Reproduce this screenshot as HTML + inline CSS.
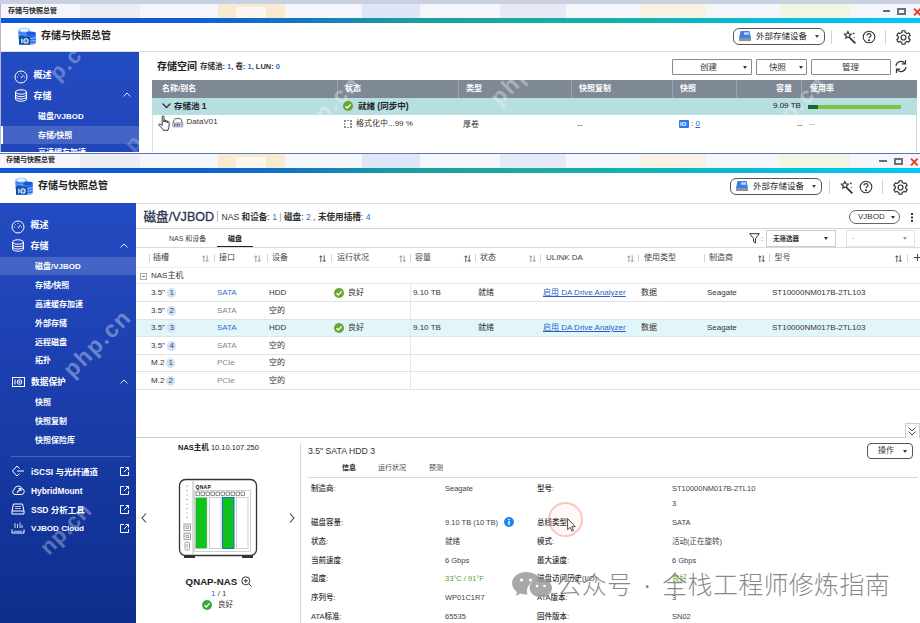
<!DOCTYPE html>
<html lang="zh-CN">
<head>
<meta charset="utf-8">
<title>存储与快照总管</title>
<style>
*{box-sizing:border-box;margin:0;padding:0}
html,body{width:920px;height:623px;overflow:hidden;background:#fff}
body{position:relative;font-family:"Liberation Sans","Noto Sans CJK SC",sans-serif;font-size:8px;color:#333;line-height:1}
.a{position:absolute;white-space:nowrap}
.t{position:absolute;white-space:nowrap;line-height:12px;height:12px}
.b{font-weight:bold}
.m{font-weight:500}
.w{color:#fff}
.bl{color:#2a6fc9}
.gr{color:#999}
svg{position:absolute;overflow:visible}
/* window chrome */
.deskstrip{left:0;top:0;width:920px;height:4px;background:#c9d1e1}
.titlebar{left:0;width:920px;background:#f4f6fb;overflow:hidden}
.grad{left:0;width:920px;background:linear-gradient(90deg,#0e56d9 0%,#0f5cd6 20%,#1478c0 33%,#1a9aa4 43%,#1aaa9a 55%,#10b3b2 70%,#06bcdc 84%,#00c8fa 100%)}
.hdr{left:0;width:920px;background:#fff;border-bottom:1px solid #dcdfe4}
.side{background:linear-gradient(180deg,#234bc1 0%,#1d41b2 35%,#13359a 75%,#0f2d8c 100%)}
.sel{background:rgba(255,255,255,.16)}
.pill{border:1px solid #555;border-radius:8px;background:#fff}
.btn{border:1px solid #8a8a8a;background:#fff;border-radius:1px}
.th{background:#7f8895}
.ln{background:#e2e4e8}
.hd{font-size:8px;color:#444}
.wm{font-size:22px;font-weight:bold;color:#fff;letter-spacing:2.3px;line-height:26px;transform:translate(-50%,-50%) rotate(-45deg)}
.sep{width:1px;background:#d2d2d2}
</style>
</head>
<body>
<!-- ================= WINDOW 1 ================= -->
<div class="a deskstrip"></div>
<div class="a titlebar" style="top:4px;height:14px" id="tb1"><div class="a" style="left:80px;top:0;width:60px;height:100%;background:#eceef3"></div><div class="a" style="left:218px;top:0;width:67px;height:100%;background:#f8ebd2"></div><div class="a" style="left:236px;top:3px;width:30px;height:100%;background:#fdf8ef"></div><div class="a" style="left:362px;top:0;width:58px;height:100%;background:#dde7f8"></div><div class="a" style="left:500px;top:0;width:66px;height:100%;background:#e6eaf8"></div><div class="a" style="left:640px;top:0;width:66px;height:100%;background:#f7f2e4"></div><div class="a" style="left:780px;top:0;width:70px;height:100%;background:#f2f5e2"></div></div>
<div class="a grad" style="top:18px;height:5px"></div>
<div class="a hdr" style="top:23px;height:29px"></div>
<div class="a" style="left:1px;top:52px;width:138px;height:100px;background:linear-gradient(180deg,#234bc1,#2046ba)" id="side1"></div>
<div class="a" style="left:0;top:4px;width:1px;height:148px;background:#b9b3cf"></div>
<div id="w1">
<!-- title bar -->
<div class="t" style="left:8px;top:5px;font-size:7px;color:#222;font-weight:bold">存储与快照总管</div>
<div class="a" style="left:882.500px;top:10px;width:7.500px;height:2px;background:#666e7a"></div>
<div class="a" style="left:897px;top:8px;width:9px;height:7px;border:2px solid #6a707c"></div>
<svg style="left:912.500px;top:7.500px" width="8" height="8" viewBox="0 0 8 8"><path d="M1 .700L7.600 7.300M7.600 .700L1 7.300" stroke="#e8392a" stroke-width="1.900" fill="none"/></svg>
<!-- app icon -->
<svg style="left:18px;top:26.500px" width="18" height="18" viewBox="0 0 18 18"><path d="M.5 3v9h11.500V3z" fill="#2d7cf5"/><path d="M.5 5.500c1.500 2 10 2 11.500 0v1.300c-1.500 2-10 2-11.500 0z" fill="#5a9bff"/><ellipse cx="6.250" cy="3" rx="5.750" ry="2.600" fill="#a6cdff"/><ellipse cx="6.250" cy="3" rx="4" ry="1.500" fill="#e8f2ff"/><path d="M8.600 6.200v9.500c0 1 2 1.800 4.600 1.800s4.600-.8 4.600-1.800V6.200z" fill="#2b6cf0"/><path d="M12 10.800c2.500.3 5-.3 5.800-1v1c-.8.800-3.300 1.300-5.800 1zM12 13.500c2.500.3 5-.3 5.800-1v1c-.8.800-3.300 1.300-5.800 1zM12 16.200c2.500.3 5-.3 5.800-1v.8c-.8.800-3.300 1.300-5.800 1z" fill="#8fbcff"/><ellipse cx="13.200" cy="6.200" rx="4.600" ry="1.800" fill="#1f56d8"/><rect x="2.300" y="8.800" width="3.500" height="1.500" fill="#0b4fa6"/><rect x="1" y="9.800" width="11.200" height="8" fill="#0b4fa6"/><rect x="3.300" y="11.600" width="1.200" height="4.600" fill="#fff"/><circle cx="8" cy="13.900" r="2.100" fill="none" stroke="#fff" stroke-width="1.100"/><path d="M7.500 13.100l1.300.8-1.300.8z" fill="#fff"/></svg>
<div class="t b" style="left:41px;top:29px;font-size:10px;color:#222;line-height:13px">存储与快照总管</div>
<!-- header right -->
<div class="a pill" style="left:733px;top:28px;width:92px;height:17px;border-radius:6px"></div>
<svg style="left:738px;top:30px" width="14" height="12" viewBox="0 0 14 12"><path d="M2.500 1h9l1.500 7H1z" fill="#3f7fe0"/><rect x="1" y="8" width="12" height="3" rx=".5" fill="#8a949e"/><rect x="6" y="2.300" width="5" height="2.500" fill="#bcd6ff"/></svg>
<div class="t" style="left:756px;top:30px;font-size:8.500px;color:#222">外部存储设备</div>
<div class="a" style="left:815px;top:35px;border:2.500px solid transparent;border-top:3px solid #444;border-bottom:0"></div>
<div class="a sep" style="left:831px;top:30px;height:14px"></div>
<svg style="left:842px;top:30px" width="15" height="15" viewBox="0 0 14 14" fill="none" stroke="#333" stroke-width="1.100"><path d="M5.500 1.500l1 2 2.200.3-1.600 1.600.4 2.200-2-1.100-2 1.100.4-2.200L2.300 3.800l2.200-.3z"/><path d="M7.500 7.500l5 5" stroke-width="1.600"/><path d="M11 2.500v1.500M10.300 3.200h1.500M11.500 6.500v1" stroke-width=".8"/></svg>
<svg style="left:862px;top:30.400px" width="14" height="14" viewBox="0 0 14 14" fill="none" stroke="#333" stroke-width="1.100"><circle cx="7" cy="7" r="5.800"/><path d="M5 5.600c0-1.300 1-2 2-2s2 .7 2 1.800c0 1.300-2 1.400-2 2.900" /><circle cx="7" cy="10.300" r=".5" fill="#333"/></svg>
<div class="a sep" style="left:885px;top:30px;height:14px"></div>
<svg style="left:894.700px;top:29.200px" width="17" height="17" viewBox="0 0 24 24" fill="none" stroke="#333" stroke-width="1.700"><path d="M12 8.500a3.500 3.500 0 1 0 0 7 3.500 3.500 0 0 0 0-7z"/><path d="M19.400 13.500c.1-.5.100-1 .1-1.500s0-1-.1-1.500l2-1.600-2-3.400-2.400 1a7.600 7.600 0 0 0-2.600-1.500L14 2.500h-4l-.4 2.500A7.600 7.600 0 0 0 7 6.500l-2.400-1-2 3.400 2 1.600c-.1.500-.1 1-.1 1.500s0 1 .1 1.500l-2 1.600 2 3.400 2.400-1a7.600 7.600 0 0 0 2.600 1.500l.4 2.500h4l.4-2.500a7.600 7.600 0 0 0 2.600-1.500l2.400 1 2-3.400z"/></svg>
<!-- sidebar 1 -->
<div class="a sel" style="left:1px;top:126px;width:138px;height:18px"></div>
<div class="a" style="left:1px;top:126px;width:2px;height:18px;background:#fff"></div>
<svg style="left:14px;top:70px" width="14" height="14" viewBox="0 0 14 14" fill="none" stroke="#fff" stroke-width="1"><circle cx="7" cy="7" r="6"/><path d="M7 8l2.500-3" /><path d="M3 7h1M10 7h1M7 3v1M4.200 4.200l.7.700" stroke-width=".8"/></svg>
<div class="t b w" style="left:33.500px;top:69px;font-size:9px">概述</div>
<svg style="left:14px;top:89px" width="14" height="13" viewBox="0 0 14 13" fill="none" stroke="#fff" stroke-width="1"><ellipse cx="7" cy="3" rx="5.500" ry="2.200"/><path d="M1.500 3v7c0 1.200 2.500 2.200 5.500 2.200s5.500-1 5.500-2.200V3M1.500 5.500c0 1.200 2.500 2.200 5.500 2.200s5.500-1 5.500-2.200M1.500 7.800c0 1.200 2.500 2.200 5.500 2.200s5.500-1 5.500-2.200"/></svg>
<div class="t b w" style="left:33.500px;top:89.500px;font-size:9px">存储</div>
<svg style="left:123px;top:92px" width="8" height="5" viewBox="0 0 8 5" fill="none" stroke="#dfe6ff" stroke-width="1"><path d="M.5 4.500L4 1l3.500 3.500"/></svg>
<div class="t b w" style="left:38px;top:111px;font-size:8px">磁盘/VJBOD</div>
<div class="t b w" style="left:38px;top:130px;font-size:8px">存储/快照</div>
<div class="a" style="left:1px;top:144px;width:138px;height:8px;overflow:hidden"><div class="t b w" style="left:37px;top:3px;font-size:8px">高速缓存加速</div></div>
<!-- content 1 -->
<div class="t b" style="left:157px;top:60px;font-size:10px;color:#222;line-height:13px">存储空间</div>
<div class="t b" style="left:200px;top:61px;font-size:7.500px;color:#333">存储池: <span class="bl">1</span>, 卷: <span class="bl">1</span>, LUN: <span class="bl">0</span></div>
<div class="a btn" style="left:672px;top:59px;width:80px;height:16px"></div>
<div class="t" style="left:700px;top:61px;font-size:8.500px">创建</div>
<div class="a" style="left:743px;top:66px;border:2px solid transparent;border-top:3px solid #333;border-bottom:0"></div>
<div class="a btn" style="left:756px;top:59px;width:51px;height:16px"></div>
<div class="t" style="left:769px;top:61px;font-size:8.500px">快照</div>
<div class="a" style="left:799px;top:66px;border:2px solid transparent;border-top:3px solid #333;border-bottom:0"></div>
<div class="a btn" style="left:811px;top:59px;width:80px;height:16px"></div>
<div class="t" style="left:842px;top:61px;font-size:8.500px">管理</div>
<svg style="left:894px;top:59px" width="14" height="15" viewBox="0 0 14 15" fill="none" stroke="#333" stroke-width="1.200"><path d="M2 7a5 5 0 0 1 9-2.500M12 8a5 5 0 0 1-9 2.500"/><path d="M11.500 1v3.800H7.800M2.500 14v-3.800h3.700"/></svg>
<!-- table 1 -->
<div class="a" id="w1rb" style="left:916px;top:115px;width:1px;height:37px;background:#d0d3d8"></div>
<div class="a" id="tblborder" style="left:152px;top:98px;width:1px;height:54px;background:#dcdfe3"></div>
<div class="a th" style="left:152px;top:80px;width:765px;height:18px"></div>
<div class="a" style="left:337px;top:80px;width:1px;height:18px;background:#9aa3ae"></div>
<div class="a" style="left:458px;top:80px;width:1px;height:18px;background:#9aa3ae"></div>
<div class="a" style="left:571px;top:80px;width:1px;height:18px;background:#9aa3ae"></div>
<div class="a" style="left:672px;top:80px;width:1px;height:18px;background:#9aa3ae"></div>
<div class="a" style="left:736px;top:80px;width:1px;height:18px;background:#9aa3ae"></div>
<div class="a" style="left:801px;top:80px;width:1px;height:18px;background:#9aa3ae"></div>
<div class="t b w" style="left:162px;top:82.5px;font-size:8px">名称/别名</div>
<div class="t b w" style="left:345px;top:82.5px;font-size:8px">状态</div>
<div class="t b w" style="left:466px;top:82.5px;font-size:8px">类型</div>
<div class="t b w" style="left:579px;top:82.5px;font-size:8px">快照复制</div>
<div class="t b w" style="left:680px;top:82.5px;font-size:8px">快照</div>
<div class="t b w" style="left:776px;top:82.5px;font-size:8px">容量</div>
<div class="t b w" style="left:810px;top:82.5px;font-size:8px">使用率</div>
<div class="a" style="left:152px;top:98px;width:765px;height:16.5px;background:#b7dee1"></div>
<svg style="left:162px;top:103.3px" width="9" height="6" viewBox="0 0 9 6" fill="none" stroke="#333" stroke-width="1.300"><path d="M.5.500l4 4 4-4"/></svg>
<div class="t b" style="left:174px;top:100.3px;font-size:8.500px;color:#222">存储池 1</div>
<svg style="left:343px;top:101.3px" width="10" height="10" viewBox="0 0 10 10"><circle cx="5" cy="5" r="5" fill="#68a832"/><path d="M2.500 5.200l1.800 1.800 3.300-3.600" stroke="#fff" stroke-width="1.300" fill="none"/></svg>
<div class="t b" style="left:358px;top:100.3px;font-size:8.500px;color:#222">就绪 (同步中)</div>
<div class="t" style="left:773px;top:100.3px;font-size:8px;color:#222">9.09 TB</div>
<div class="a" style="left:808px;top:105.3px;width:93px;height:4px;background:#7fc241"></div>
<div class="a" style="left:808px;top:105.3px;width:10px;height:4px;background:#156b2c"></div>
<!-- row 2 -->
<svg style="left:158px;top:115px" width="12" height="16" viewBox="0 0 12 16" fill="#fff" stroke="#222" stroke-width=".9" stroke-linejoin="round"><path d="M4.200 10.300V1.900a.9.900 0 0 1 1.800 0V7 5.900a.9.900 0 0 1 1.800 0v1.300-.6a.85.850 0 0 1 1.700 0v1.100-.4a.8.800 0 0 1 1.600 0V11c0 1.500-.5 2.400-1 3.200v1.100H5.200v-.8C4 13.500 2.500 11.800 1 10.200c-.6-.8.400-1.700 1.200-1z"/></svg>
<svg style="left:172px;top:118px" width="11.500" height="9.600" viewBox="0 0 12 10"><path d="M1 5L2.600 1.300Q2.800.6 3.600.6H8.400Q9.200.6 9.400 1.300L11 5" fill="#fff" stroke="#444" stroke-width=".9"/><rect x=".6" y="5" width="10.800" height="4.300" rx=".6" fill="#dfe7f5" stroke="#6f7f9c" stroke-width=".7"/><path d="M2.500 5.900v2.600M4.200 5.900v2.600M5.900 5.900v2.600M7.400 5.900v2.600" stroke="#333" stroke-width=".8"/><path d="M8.300 6.400h2.500L9.550 8.200z" fill="#2a6fd8"/></svg>
<div class="t" style="left:186.500px;top:115.500px;font-size:8px;color:#333">DataV01</div>
<svg style="left:344px;top:120px" width="8" height="8" viewBox="0 0 8 8" fill="#8a8a8a"><rect x="0" y="0" width="2" height="2"/><rect x="3" y="0" width="2" height="1"/><rect x="6" y="0" width="2" height="2"/><rect x="0" y="3" width="1" height="2"/><rect x="6" y="3" width="2" height="2"/><rect x="0" y="6" width="2" height="2"/><rect x="3" y="7" width="2" height="1"/><rect x="6" y="6" width="2" height="2"/></svg>
<div class="t" style="left:356px;top:118px;font-size:8px;color:#333">格式化中...99 %</div>
<div class="t" style="left:463px;top:119px;font-size:8px;color:#333">厚卷</div>
<div class="t" style="left:577px;top:119px;font-size:8px;color:#333">--</div>
<div class="a" style="left:679px;top:120px;width:10px;height:8px;background:#2a7be8;border-radius:1px"></div>
<div class="t b" style="left:680px;top:118px;font-size:6px;color:#fff">IO</div>
<div class="t" style="left:691px;top:118px;font-size:8px;color:#333">: <span style="color:#2a5fc9;text-decoration:underline">0</span></div>
<div class="t" style="left:797px;top:119px;font-size:8px;color:#333">--</div>
<div class="t" style="left:809px;top:118px;font-size:8px;color:#888">--</div>
</div>


<!-- ================= WINDOW 2 ================= -->
<div class="a titlebar" style="top:152.600px;height:15.400px;border-top:1px solid #5b78bb" id="tb2"><div class="a" style="left:80px;top:0;width:60px;height:100%;background:#eceef3"></div><div class="a" style="left:218px;top:0;width:67px;height:100%;background:#f8ebd2"></div><div class="a" style="left:236px;top:3px;width:30px;height:100%;background:#fdf8ef"></div><div class="a" style="left:362px;top:0;width:58px;height:100%;background:#dde7f8"></div><div class="a" style="left:500px;top:0;width:66px;height:100%;background:#e6eaf8"></div><div class="a" style="left:640px;top:0;width:66px;height:100%;background:#f7f2e4"></div><div class="a" style="left:780px;top:0;width:70px;height:100%;background:#f2f5e2"></div></div>
<div class="a grad" style="top:168px;height:5px"></div>
<div class="a hdr" style="top:173px;height:30.5px"></div>
<div class="a side" style="left:0;top:203px;width:136px;height:420px" id="side2"></div>
<div id="w2">
<div class="t b" style="left:6px;top:154px;font-size:7px;color:#222">存储与快照总管</div>
<div class="a" style="left:879px;top:160px;width:8px;height:2px;background:#666e7a"></div>
<div class="a" style="left:894px;top:158px;width:9px;height:7px;border:2px solid #6a707c"></div>
<svg style="left:909.5px;top:157.5px" width="8" height="8" viewBox="0 0 8 8"><path d="M1 .7L7.600 7.300M7.600 .7L1 7.300" stroke="#e8392a" stroke-width="1.900" fill="none"/></svg>
<svg style="left:15px;top:176.5px" width="18" height="18" viewBox="0 0 18 18"><path d="M.5 3v9h11.500V3z" fill="#2d7cf5"/><path d="M.5 5.500c1.500 2 10 2 11.500 0v1.300c-1.500 2-10 2-11.500 0z" fill="#5a9bff"/><ellipse cx="6.250" cy="3" rx="5.750" ry="2.600" fill="#a6cdff"/><ellipse cx="6.250" cy="3" rx="4" ry="1.500" fill="#e8f2ff"/><path d="M8.600 6.200v9.500c0 1 2 1.800 4.600 1.800s4.600-.8 4.600-1.800V6.200z" fill="#2b6cf0"/><path d="M12 10.800c2.500.3 5-.3 5.800-1v1c-.8.800-3.300 1.300-5.800 1zM12 13.500c2.500.3 5-.3 5.800-1v1c-.8.800-3.300 1.300-5.800 1zM12 16.200c2.500.3 5-.3 5.800-1v.8c-.8.800-3.300 1.300-5.800 1z" fill="#8fbcff"/><ellipse cx="13.200" cy="6.200" rx="4.600" ry="1.800" fill="#1f56d8"/><rect x="2.300" y="8.800" width="3.500" height="1.500" fill="#0b4fa6"/><rect x="1" y="9.800" width="11.200" height="8" fill="#0b4fa6"/><rect x="3.300" y="11.600" width="1.200" height="4.600" fill="#fff"/><circle cx="8" cy="13.900" r="2.100" fill="none" stroke="#fff" stroke-width="1.100"/><path d="M7.500 13.100l1.300.8-1.300.8z" fill="#fff"/></svg>
<div class="t b" style="left:38px;top:179px;font-size:10px;color:#222;line-height:13px">存储与快照总管</div>
<div class="a pill" style="left:730px;top:178px;width:92px;height:17px;border-radius:6px"></div>
<svg style="left:735px;top:180px" width="14" height="12" viewBox="0 0 14 12"><path d="M2.500 1h9l1.500 7H1z" fill="#3f7fe0"/><rect x="1" y="8" width="12" height="3" rx=".5" fill="#8a949e"/><rect x="6" y="2.300" width="5" height="2.500" fill="#bcd6ff"/></svg>
<div class="t" style="left:753px;top:180px;font-size:8.5px;color:#222">外部存储设备</div>
<div class="a" style="left:812px;top:185px;border:2.5px solid transparent;border-top:3px solid #444;border-bottom:0"></div>
<div class="a sep" style="left:829px;top:180px;height:14px"></div>
<svg style="left:839px;top:180px" width="15" height="15" viewBox="0 0 14 14"><g fill="none" stroke="#333" stroke-width="1.100"><path d="M5.500 1.500l1 2 2.200.3-1.600 1.600.4 2.200-2-1.100-2 1.100.4-2.200L2.300 3.800l2.200-.3z"/><path d="M7.500 7.500l5 5" stroke-width="1.600"/><path d="M11 2.500v1.500M10.300 3.200h1.500M11.500 6.500v1" stroke-width=".8"/></g></svg>
<svg style="left:859.3px;top:180.4px" width="14" height="14" viewBox="0 0 14 14"><g fill="none" stroke="#333" stroke-width="1.100"><circle cx="7" cy="7" r="5.800"/><path d="M5 5.600c0-1.300 1-2 2-2s2 .7 2 1.800c0 1.300-2 1.400-2 2.900"/><circle cx="7" cy="10.300" r=".5" fill="#333"/></g></svg>
<div class="a sep" style="left:882px;top:180px;height:14px"></div>
<svg style="left:891.7px;top:179px" width="17" height="17" viewBox="0 0 24 24"><g fill="none" stroke="#333" stroke-width="1.700"><path d="M12 8.500a3.500 3.500 0 1 0 0 7 3.500 3.500 0 0 0 0-7z"/><path d="M19.400 13.500c.1-.5.100-1 .1-1.500s0-1-.1-1.500l2-1.600-2-3.400-2.400 1a7.600 7.600 0 0 0-2.600-1.500L14 2.500h-4l-.4 2.500A7.600 7.600 0 0 0 7 6.500l-2.400-1-2 3.400 2 1.600c-.1.500-.1 1-.1 1.500s0 1 .1 1.500l-2 1.600 2 3.400 2.400-1a7.600 7.600 0 0 0 2.600 1.500l.4 2.500h4l.4-2.500a7.600 7.600 0 0 0 2.600-1.500l2.400 1 2-3.400z"/></g></svg>
<div class="a sel" style="left:0;top:257px;width:136px;height:18px"></div>
<svg style="left:11.1px;top:220.1px" width="14" height="14" viewBox="0 0 14 14"><g fill="none" stroke="#fff" stroke-width="1"><circle cx="7" cy="7" r="6"/><path d="M7 8l2.500-3"/><path d="M3 7h1M10 7h1M7 3v1M4.200 4.200l.7.700" stroke-width=".8"/></g></svg>
<div class="t b w" style="left:30.5px;top:219px;font-size:9px">概述</div>
<svg style="left:11.2px;top:239.3px" width="14" height="13" viewBox="0 0 14 13"><g fill="none" stroke="#fff" stroke-width="1"><ellipse cx="7" cy="3" rx="5.500" ry="2.200"/><path d="M1.500 3v7c0 1.200 2.500 2.200 5.500 2.200s5.500-1 5.500-2.200V3M1.500 5.500c0 1.200 2.500 2.200 5.500 2.200s5.500-1 5.500-2.200M1.500 7.800c0 1.200 2.500 2.200 5.500 2.200s5.500-1 5.500-2.200"/></g></svg>
<div class="t b w" style="left:30.5px;top:239.5px;font-size:9px">存储</div>
<svg style="left:120px;top:243px" width="8" height="5" viewBox="0 0 8 5"><path d="M.5 4.500L4 1l3.500 3.500" fill="none" stroke="#dfe6ff" stroke-width="1"/></svg>
<div class="t b w" style="left:35px;top:261px;font-size:8px">磁盘/VJBOD</div>
<div class="t b w" style="left:35px;top:280px;font-size:8px">存储/快照</div>
<div class="t b w" style="left:35px;top:299px;font-size:8px">高速缓存加速</div>
<div class="t b w" style="left:35px;top:318px;font-size:8px">外部存储</div>
<div class="t b w" style="left:35px;top:337px;font-size:8px">远程磁盘</div>
<div class="t b w" style="left:35px;top:355px;font-size:8px">拓扑</div>
<svg style="left:12px;top:377px" width="13" height="10" viewBox="0 0 13 10" fill="none" stroke="#fff" stroke-width="1"><rect x=".5" y=".5" width="12" height="9"/><path d="M3 2.5v5"/><circle cx="7.5" cy="5" r="2.3"/><circle cx="7.5" cy="5" r=".6" fill="#fff"/></svg>
<div class="t b w" style="left:31px;top:375.5px;font-size:8.7px">数据保护</div>
<svg style="left:120px;top:379px" width="8" height="5" viewBox="0 0 8 5"><path d="M.5 4.500L4 1l3.500 3.500" fill="none" stroke="#dfe6ff" stroke-width="1"/></svg>
<div class="t b w" style="left:35px;top:397.2px;font-size:8px">快照</div>
<div class="t b w" style="left:35px;top:416.2px;font-size:8px">快照复制</div>
<div class="t b w" style="left:35px;top:434.5px;font-size:8px">快照保险库</div>
<div class="a" style="left:11px;top:456px;width:120px;height:1px;background:rgba(255,255,255,.22)"></div>
<svg style="left:11px;top:465px" width="14" height="12" viewBox="0 0 14 12"><g fill="none" stroke="#fff" stroke-width="1"><path d="M6 1L1.500 6 6 11M6 1l2.500 2.500M6 11l2.500-2.500"/><path d="M6 6h7"/></g></svg>
<div class="t b w" style="left:31px;top:465.5px;font-size:8.5px">iSCSI 与光纤通道</div>
<svg style="left:120.3px;top:467px" width="9" height="9" viewBox="0 0 9 9"><g fill="none" stroke="#fff" stroke-width="1"><path d="M4 .500H.500v8h8V5"/><path d="M5.500.500h3v3M8.500.500L4 5"/></g></svg>
<svg style="left:11px;top:484px" width="14" height="12" viewBox="0 0 14 12"><g fill="none" stroke="#fff" stroke-width="1"><path d="M4 10.500h6.500a3 3 0 0 0 .5-5.900 4 4 0 0 0-7.700.9A2.600 2.600 0 0 0 4 10.500z"/><path d="M6 8.500l4-4M10 4.500H7.500M10 4.500V7" stroke-width="1.100"/></g></svg>
<div class="t b w" style="left:31px;top:484.5px;font-size:8.35px">HybridMount</div>
<svg style="left:120.3px;top:486px" width="9" height="9" viewBox="0 0 9 9"><g fill="none" stroke="#fff" stroke-width="1"><path d="M4 .500H.500v8h8V5"/><path d="M5.500.500h3v3M8.500.500L4 5"/></g></svg>
<svg style="left:11px;top:503px" width="14" height="12" viewBox="0 0 14 12"><g fill="none" stroke="#fff" stroke-width="1"><path d="M2.500 1h9l1.500 7v3H1V8z"/><path d="M1 8h12"/><path d="M4 3.500h6M4 5.500h6" stroke-width=".7"/></g></svg>
<div class="t b w" style="left:31px;top:503.5px;font-size:8.5px">SSD 分析工具</div>
<svg style="left:120.3px;top:505px" width="9" height="9" viewBox="0 0 9 9"><g fill="none" stroke="#fff" stroke-width="1"><path d="M4 .500H.500v8h8V5"/><path d="M5.500.500h3v3M8.500.500L4 5"/></g></svg>
<svg style="left:11px;top:522px" width="14" height="12" viewBox="0 0 14 12"><g fill="none" stroke="#fff" stroke-width="1"><path d="M1 7.500v3.500h12V7.500"/><path d="M3 9.300h8" stroke-width=".7"/><path d="M4 1v5M6.500 2v4M9 .500v5.500M11 3v3" stroke-width=".8"/></g></svg>
<div class="t b w" style="left:31px;top:522.5px;font-size:8.1px">VJBOD Cloud</div>
<svg style="left:120.3px;top:524px" width="9" height="9" viewBox="0 0 9 9"><g fill="none" stroke="#fff" stroke-width="1"><path d="M4 .500H.500v8h8V5"/><path d="M5.500.500h3v3M8.500.500L4 5"/></g></svg>
<div class="t" style="left:143.5px;top:209px;font-size:12.6px;line-height:17px;height:17px;color:#2a3350;-webkit-text-stroke:.3px #2a3350">磁盘/VJBOD</div>
<div class="a" style="left:217px;top:211px;width:1px;height:11px;background:#bbb"></div>
<div class="t" style="left:221.5px;top:210.5px;font-size:8.6px;color:#333">NAS <b>和设备</b>: <span class="bl">1</span> <span style="color:#999">|</span> <b>磁盘</b>: <span class="bl">2</span> , <b>未使用插槽</b>: <span class="bl">4</span></div>
<div class="a pill" style="left:849px;top:210px;width:51px;height:14px;border-radius:7px;border-color:#666"></div>
<div class="t" style="left:858px;top:211px;font-size:8px;color:#333">VJBOD</div>
<div class="a" style="left:891px;top:216px;border:2px solid transparent;border-top:3px solid #333;border-bottom:0"></div>
<div class="a" style="left:910.5px;top:213px;width:2px;height:2px;background:#333;box-shadow:0 3.5px 0 #333,0 7px 0 #333"></div>
<div class="a ln" style="left:136px;top:228px;width:784px;height:1px;background:#d0d3d8"></div>
<div class="t" style="left:169px;top:233px;font-size:7px;color:#444">NAS 和设备</div>
<div class="t b" style="left:228px;top:233px;font-size:7px;color:#222">磁盘</div>
<div class="a" style="left:217px;top:246.4px;width:36px;height:2px;background:#222"></div>
<div class="a ln" style="left:136px;top:247px;width:784px;height:1px;background:#d8dbe0"></div>
<svg style="left:749px;top:233px" width="11" height="11" viewBox="0 0 11 11" fill="none" stroke="#333" stroke-width="1"><path d="M.7.7h9.6L6.5 5.5V10L4.5 8.500V5.500z"/></svg>
<div class="t" style="left:761px;top:233px;font-size:8px;color:#555">:</div>
<div class="a" style="left:766px;top:230px;width:70px;height:17px;border:1px solid #c8ccd2;background:#fff"></div>
<div class="t b" style="left:773px;top:233px;font-size:6.5px;color:#333">无筛选器</div>
<div class="a" style="left:824px;top:237px;border:2.5px solid transparent;border-top:3px solid #333;border-bottom:0"></div>
<div class="a" style="left:846px;top:230px;width:69px;height:17px;border:1px solid #dfe2e6;background:#fff"></div>
<div class="t" style="left:852px;top:232px;font-size:7px;color:#aaa">-</div>
<div class="a" style="left:903px;top:237px;border:2.5px solid transparent;border-top:3px solid #999;border-bottom:0"></div>
<div class="a" style="left:149px;top:253.5px;width:1px;height:8.5px;background:#cfd2d6"></div>
<div class="a" style="left:214px;top:253.5px;width:1px;height:8.5px;background:#cfd2d6"></div>
<div class="a" style="left:267px;top:253.5px;width:1px;height:8.5px;background:#cfd2d6"></div>
<div class="a" style="left:331px;top:253.5px;width:1px;height:8.5px;background:#cfd2d6"></div>
<div class="a" style="left:410px;top:253.5px;width:1px;height:8.5px;background:#cfd2d6"></div>
<div class="a" style="left:475px;top:253.5px;width:1px;height:8.5px;background:#cfd2d6"></div>
<div class="a" style="left:540px;top:253.5px;width:1px;height:8.5px;background:#cfd2d6"></div>
<div class="a" style="left:638px;top:253.5px;width:1px;height:8.5px;background:#cfd2d6"></div>
<div class="a" style="left:704px;top:253.5px;width:1px;height:8.5px;background:#cfd2d6"></div>
<div class="a" style="left:769px;top:253.5px;width:1px;height:8.5px;background:#cfd2d6"></div>
<div class="a" style="left:907px;top:253.5px;width:1px;height:8.5px;background:#cfd2d6"></div>
<div class="t hd" style="left:153px;top:252px">插槽</div>
<svg style="left:201.5px;top:254.5px" width="7" height="7.5" viewBox="0 0 7 7.5" fill="none" stroke="#888" stroke-width=".8"><path d="M1.8 7.2V.8M.3 2.3L1.800 .8l1.500 1.500M5.200 .3v6.400M3.700 5.200l1.500 1.500 1.500-1.500"/></svg>
<div class="t hd" style="left:219px;top:252px">接口</div>
<svg style="left:253.5px;top:254.5px" width="7" height="7.5" viewBox="0 0 7 7.5" fill="none" stroke="#888" stroke-width=".8"><path d="M1.8 7.2V.8M.3 2.3L1.800 .8l1.500 1.500M5.200 .3v6.400M3.700 5.200l1.500 1.500 1.500-1.500"/></svg>
<div class="t hd" style="left:272px;top:252px">设备</div>
<svg style="left:318.5px;top:254.5px" width="7" height="7.5" viewBox="0 0 7 7.5" fill="none" stroke="#333" stroke-width=".8"><path d="M1.8 7.2V.8M.3 2.3L1.800 .8l1.500 1.500M5.200 .3v6.400M3.700 5.200l1.500 1.500 1.500-1.500"/></svg>
<div class="t hd" style="left:337px;top:252px">运行状况</div>
<svg style="left:398.5px;top:254.5px" width="7" height="7.5" viewBox="0 0 7 7.5" fill="none" stroke="#888" stroke-width=".8"><path d="M1.8 7.2V.8M.3 2.3L1.800 .8l1.500 1.500M5.200 .3v6.400M3.700 5.200l1.500 1.500 1.500-1.500"/></svg>
<div class="t hd" style="left:415px;top:252px">容量</div>
<svg style="left:463.5px;top:254.5px" width="7" height="7.5" viewBox="0 0 7 7.5" fill="none" stroke="#333" stroke-width=".8"><path d="M1.8 7.2V.8M.3 2.3L1.800 .8l1.500 1.500M5.200 .3v6.400M3.700 5.200l1.500 1.500 1.500-1.500"/></svg>
<div class="t hd" style="left:480px;top:252px">状态</div>
<svg style="left:528.5px;top:254.5px" width="7" height="7.5" viewBox="0 0 7 7.5" fill="none" stroke="#888" stroke-width=".8"><path d="M1.8 7.2V.8M.3 2.3L1.800 .8l1.500 1.500M5.200 .3v6.400M3.700 5.200l1.500 1.500 1.500-1.500"/></svg>
<div class="t hd" style="left:546px;top:252px">ULINK DA</div>
<svg style="left:627.0px;top:254.5px" width="7" height="7.5" viewBox="0 0 7 7.5" fill="none" stroke="#888" stroke-width=".8"><path d="M1.8 7.2V.8M.3 2.3L1.800 .8l1.500 1.500M5.200 .3v6.400M3.700 5.200l1.500 1.500 1.500-1.500"/></svg>
<div class="t hd" style="left:644px;top:252px">使用类型</div>
<div class="t hd" style="left:709px;top:252px">制造商</div>
<svg style="left:757.5px;top:254.5px" width="7" height="7.5" viewBox="0 0 7 7.5" fill="none" stroke="#333" stroke-width=".8"><path d="M1.8 7.2V.8M.3 2.3L1.800 .8l1.500 1.500M5.200 .3v6.400M3.700 5.200l1.500 1.500 1.500-1.500"/></svg>
<div class="t hd" style="left:774.5px;top:252px">型号</div>
<svg style="left:894.5px;top:254.5px" width="7" height="7.5" viewBox="0 0 7 7.5" fill="none" stroke="#333" stroke-width=".8"><path d="M1.8 7.2V.8M.3 2.3L1.800 .8l1.500 1.500M5.200 .3v6.400M3.700 5.200l1.500 1.500 1.500-1.500"/></svg>
<div class="a" style="left:914px;top:257px;width:7px;height:1px;background:#444"></div><div class="a" style="left:917px;top:254px;width:1px;height:7px;background:#444"></div>
<div class="a" style="left:136px;top:267px;width:784px;height:1px;background:#eceef1"></div>
<div class="a" style="left:139.5px;top:272.5px;width:7px;height:7px;border:1px solid #a8a8a8;background:#fff"></div>
<div class="a" style="left:141.5px;top:275.5px;width:3px;height:1px;background:#777"></div>
<div class="t" style="left:151px;top:270px;font-size:8px;color:#333">NAS主机</div>
<div class="a ln" style="left:136px;top:283px;width:784px;height:1px;background:#e8eaee"></div>
<div class="a" style="left:136px;top:319px;width:784px;height:18px;background:#e2f6fa"></div>
<div class="a" style="left:136px;top:301px;width:784px;height:1px;background:#dfe2e6"></div>
<div class="a" style="left:136px;top:319px;width:784px;height:1px;background:#dfe2e6"></div>
<div class="a" style="left:136px;top:336px;width:784px;height:1px;background:#dfe2e6"></div>
<div class="a" style="left:136px;top:354px;width:784px;height:1px;background:#dfe2e6"></div>
<div class="a" style="left:136px;top:371px;width:784px;height:1px;background:#dfe2e6"></div>
<div class="a" style="left:136px;top:389px;width:784px;height:1px;background:#dfe2e6"></div>
<div class="a" style="left:410px;top:284px;width:1px;height:105px;background:#e6e8ec"></div>
<div class="t" style="left:151px;top:287px;font-size:8px;color:#333">3.5"</div>
<div class="a" style="left:167px;top:288px;width:9px;height:10px;border-radius:5px;background:#d4e3f0"></div>
<div class="t" style="left:169.5px;top:287px;font-size:8px;color:#2a4a7a">1</div>
<div class="t" style="left:217px;top:287px;font-size:8px;color:#2a6fc9">SATA</div>
<div class="t" style="left:269px;top:287px;font-size:8px;color:#333">HDD</div>
<svg style="left:334px;top:288px" width="10" height="10" viewBox="0 0 10 10"><circle cx="5" cy="5" r="5" fill="#68a832"/><path d="M2.500 5.200l1.800 1.800 3.300-3.600" stroke="#fff" stroke-width="1.300" fill="none"/></svg>
<div class="t" style="left:348px;top:287px;font-size:8px;color:#333">良好</div>
<div class="t" style="left:413px;top:287px;font-size:8px;color:#333">9.10 TB</div>
<div class="t" style="left:478px;top:287px;font-size:8px;color:#333">就绪</div>
<div class="t" style="left:543px;top:287px;font-size:8px;color:#2a5fc9;text-decoration:underline">启用 DA Drive Analyzer</div>
<div class="t" style="left:641px;top:287px;font-size:8px;color:#333">数据</div>
<div class="t" style="left:707px;top:287px;font-size:8px;color:#333">Seagate</div>
<div class="t" style="left:772px;top:287px;font-size:8px;color:#333">ST10000NM017B-2TL103</div>
<div class="t" style="left:151px;top:305px;font-size:8px;color:#333">3.5"</div>
<div class="a" style="left:167px;top:306px;width:9px;height:10px;border-radius:5px;background:#d4e3f0"></div>
<div class="t" style="left:169.5px;top:305px;font-size:8px;color:#2a4a7a">2</div>
<div class="t" style="left:217px;top:305px;font-size:8px;color:#888">SATA</div>
<div class="t" style="left:269px;top:305px;font-size:8px;color:#333">空的</div>
<div class="t" style="left:151px;top:322px;font-size:8px;color:#333">3.5"</div>
<div class="a" style="left:167px;top:323px;width:9px;height:10px;border-radius:5px;background:#d4e3f0"></div>
<div class="t" style="left:169.5px;top:322px;font-size:8px;color:#2a4a7a">3</div>
<div class="t" style="left:217px;top:322px;font-size:8px;color:#2a6fc9">SATA</div>
<div class="t" style="left:269px;top:322px;font-size:8px;color:#333">HDD</div>
<svg style="left:334px;top:323px" width="10" height="10" viewBox="0 0 10 10"><circle cx="5" cy="5" r="5" fill="#68a832"/><path d="M2.500 5.200l1.800 1.800 3.300-3.600" stroke="#fff" stroke-width="1.300" fill="none"/></svg>
<div class="t" style="left:348px;top:322px;font-size:8px;color:#333">良好</div>
<div class="t" style="left:413px;top:322px;font-size:8px;color:#333">9.10 TB</div>
<div class="t" style="left:478px;top:322px;font-size:8px;color:#333">就绪</div>
<div class="t" style="left:543px;top:322px;font-size:8px;color:#2a5fc9;text-decoration:underline">启用 DA Drive Analyzer</div>
<div class="t" style="left:641px;top:322px;font-size:8px;color:#333">数据</div>
<div class="t" style="left:707px;top:322px;font-size:8px;color:#333">Seagate</div>
<div class="t" style="left:772px;top:322px;font-size:8px;color:#333">ST10000NM017B-2TL103</div>
<div class="t" style="left:151px;top:340px;font-size:8px;color:#333">3.5"</div>
<div class="a" style="left:167px;top:341px;width:9px;height:10px;border-radius:5px;background:#d4e3f0"></div>
<div class="t" style="left:169.5px;top:340px;font-size:8px;color:#2a4a7a">4</div>
<div class="t" style="left:217px;top:340px;font-size:8px;color:#888">SATA</div>
<div class="t" style="left:269px;top:340px;font-size:8px;color:#333">空的</div>
<div class="t" style="left:151px;top:357px;font-size:8px;color:#333">M.2</div>
<div class="a" style="left:166px;top:358px;width:9px;height:10px;border-radius:5px;background:#d4e3f0"></div>
<div class="t" style="left:168.5px;top:357px;font-size:8px;color:#2a4a7a">1</div>
<div class="t" style="left:217px;top:357px;font-size:8px;color:#888">PCIe</div>
<div class="t" style="left:269px;top:357px;font-size:8px;color:#333">空的</div>
<div class="t" style="left:151px;top:375px;font-size:8px;color:#333">M.2</div>
<div class="a" style="left:166px;top:376px;width:9px;height:10px;border-radius:5px;background:#d4e3f0"></div>
<div class="t" style="left:168.5px;top:375px;font-size:8px;color:#2a4a7a">2</div>
<div class="t" style="left:217px;top:375px;font-size:8px;color:#888">PCIe</div>
<div class="t" style="left:269px;top:375px;font-size:8px;color:#333">空的</div>
<div class="a" style="left:136px;top:437px;width:784px;height:1px;background:#c9ccd2"></div>
<div class="a" style="left:905px;top:423px;width:15px;height:15px;border:1px solid #c9ccd2;border-bottom:0;background:#fff"></div>
<svg style="left:908px;top:427px" width="8" height="9" viewBox="0 0 8 9" fill="none" stroke="#444" stroke-width="1"><path d="M.5.5L4 4 7.5.5M.5 4.5L4 8l3.500-3.500"/></svg>
<div class="t" style="left:178px;top:442px;font-size:7.5px;color:#222"><b>NAS主机</b> 10.10.107.250</div>
<svg style="left:141px;top:513px" width="6" height="10" viewBox="0 0 6 10" fill="none" stroke="#444" stroke-width="1.1"><path d="M5 .5L1 5l4 4.500"/></svg>
<svg style="left:289px;top:513px" width="6" height="10" viewBox="0 0 6 10" fill="none" stroke="#444" stroke-width="1.1"><path d="M1 .5L5 5 1 9.500"/></svg>
<div class="t b" style="left:185.6px;top:574.5px;font-size:9.7px;line-height:14px;height:14px;color:#222">QNAP-NAS</div>
<svg style="left:240.5px;top:575.5px" width="11" height="11" viewBox="0 0 11 11" fill="none" stroke="#333" stroke-width="1"><circle cx="4.8" cy="4.8" r="4"/><path d="M2.800 4.800h4M4.800 2.800v4M7.800 7.800l2.700 2.700"/></svg>
<div class="t" style="left:211px;top:587.7px;font-size:8px;color:#444"><span class="bl">1</span> / 1</div>
<svg style="left:202px;top:599.5px" width="10" height="10" viewBox="0 0 10 10"><circle cx="5" cy="5" r="5" fill="#3aa935"/><path d="M2.500 5.200l1.800 1.800 3.300-3.600" stroke="#fff" stroke-width="1.300" fill="none"/></svg>
<div class="t" style="left:218px;top:598.5px;font-size:7.5px;color:#333">良好</div>
<div class="a" style="left:300px;top:443px;width:1px;height:180px;background:#d5d8dd"></div>
<svg style="left:178.3px;top:477.5px" width="80" height="82" viewBox="0 0 80 82">
<rect x="6" y="77" width="11" height="3" fill="#333"/><rect x="64" y="77" width="11" height="3" fill="#333"/>
<rect x="1.5" y="1.5" width="77" height="76" rx="6" fill="#fff" stroke="#333" stroke-width="1.3"/>
<path d="M15 3v73" stroke="#999" stroke-width=".7"/>
<g fill="#666"><circle cx="9" cy="8" r=".6"/><circle cx="9" cy="12.5" r=".6"/><circle cx="9" cy="17" r=".6"/><circle cx="9" cy="21.5" r=".6"/><circle cx="9" cy="26" r=".6"/><circle cx="9" cy="30.5" r=".6"/><circle cx="9" cy="35" r=".6"/><circle cx="9" cy="39.5" r=".6"/></g>
<g fill="none" stroke="#777" stroke-width=".7"><rect x="6" y="46" width="6.5" height="6.5"/><rect x="8" y="48" width="2.5" height="2.5"/><rect x="6" y="55" width="6.5" height="6.5"/><rect x="8" y="57" width="2.5" height="2.5"/><rect x="7" y="64" width="4.5" height="8" rx="1.5"/><path d="M9.2 66v4"/></g>
<text x="17.5" y="10.8" font-family="Liberation Sans,sans-serif" font-size="5" font-weight="bold" letter-spacing=".3" fill="#111">QNAP</text>
<rect x="16.5" y="12.5" width="56" height="61" fill="none" stroke="#bbb" stroke-width=".7"/>
<g fill="#fff" stroke="#444" stroke-width=".6"><rect x="18" y="14" width="3.6" height="3.6"/><rect x="23" y="14" width="3.6" height="3.6"/><rect x="28" y="14" width="3.6" height="3.6"/><rect x="33" y="14" width="3.6" height="3.6"/><rect x="38" y="14" width="3.6" height="3.6"/><rect x="43" y="14" width="3.6" height="3.6"/><rect x="48" y="14" width="3.6" height="3.6"/><rect x="53" y="14" width="3.6" height="3.6"/><rect x="58" y="14" width="3.6" height="3.6"/><rect x="63" y="14" width="3.6" height="3.6"/></g>
<rect x="17.5" y="19.5" width="11.5" height="51" fill="#0fc21c" stroke="#bbb" stroke-width=".5"/>
<rect x="31.5" y="19.5" width="11.5" height="51" fill="#fff" stroke="#bbb" stroke-width=".7"/>
<rect x="44.5" y="19.5" width="11.5" height="51" fill="#0fc21c" stroke="#1d66d8" stroke-width="1"/>
<rect x="58.5" y="19.5" width="11.5" height="51" fill="#fff" stroke="#bbb" stroke-width=".7"/>
</svg>
<div class="t" style="left:308px;top:444.7px;font-size:8.7px;color:#333">3.5" SATA HDD 3</div>
<div class="a" style="left:867px;top:443px;width:46px;height:16px;border:1px solid #555;border-radius:4px;background:#fff"></div>
<div class="t" style="left:878px;top:445px;font-size:8px;color:#333">操作</div>
<div class="a" style="left:903px;top:450px;border:2px solid transparent;border-top:3px solid #333;border-bottom:0"></div>
<div class="t b" style="left:342px;top:461.7px;font-size:7px;color:#222">信息</div>
<div class="t" style="left:378px;top:461.7px;font-size:7px;color:#444">运行状况</div>
<div class="t" style="left:429px;top:461.7px;font-size:7px;color:#444">预测</div>
<div class="a" style="left:308px;top:477px;width:610px;height:1px;background:#d5d8dd"></div>
<div class="t m" style="left:311px;top:483px;font-size:7.5px;color:#333">制造商:</div>
<div class="t" style="left:445px;top:483px;font-size:7.5px;color:#444">Seagate</div>
<div class="t m" style="left:537px;top:483px;font-size:7.5px;color:#333">型号:</div>
<div class="t" style="left:672px;top:483px;font-size:7.5px;color:#444">ST10000NM017B-2TL10</div>
<div class="t" style="left:672px;top:498px;font-size:7.5px;color:#444">3</div>
<div class="t m" style="left:311px;top:517px;font-size:7.5px;color:#333">磁盘容量:</div>
<div class="t" style="left:445px;top:517px;font-size:7.5px;color:#444">9.10 TB (10 TB)</div>
<div class="t m" style="left:537px;top:517px;font-size:7.5px;color:#333">总线类型:</div>
<div class="t" style="left:672px;top:517px;font-size:7.5px;color:#444">SATA</div>
<div class="t m" style="left:311px;top:536px;font-size:7.5px;color:#333">状态:</div>
<div class="t" style="left:445px;top:536px;font-size:7.5px;color:#444">就绪</div>
<div class="t m" style="left:537px;top:536px;font-size:7.5px;color:#333">模式:</div>
<div class="t" style="left:672px;top:536px;font-size:7.5px;color:#444">活动(正在旋转)</div>
<div class="t m" style="left:311px;top:555px;font-size:7.5px;color:#333">当前速度:</div>
<div class="t" style="left:445px;top:555px;font-size:7.5px;color:#444">6 Gbps</div>
<div class="t m" style="left:537px;top:555px;font-size:7.5px;color:#333">最大速度:</div>
<div class="t" style="left:672px;top:555px;font-size:7.5px;color:#444">6 Gbps</div>
<div class="t m" style="left:311px;top:573px;font-size:7.5px;color:#333">温度:</div>
<div class="t" style="left:445px;top:573px;font-size:7.5px;color:#5aa02c">33°C / 91°F</div>
<div class="t m" style="left:537px;top:573px;font-size:7.5px;color:#333">磁盘访问历史(I/O):</div>
<div class="t" style="left:672px;top:573px;font-size:7.5px;color:#5aa02c">良好</div>
<div class="t m" style="left:311px;top:592px;font-size:7.5px;color:#333">序列号:</div>
<div class="t" style="left:445px;top:592px;font-size:7.5px;color:#444">WP01C1R7</div>
<div class="t m" style="left:537px;top:592px;font-size:7.5px;color:#333">ATA版本:</div>
<div class="t" style="left:672px;top:592px;font-size:7.5px;color:#444">3</div>
<div class="t m" style="left:311px;top:611px;font-size:7.5px;color:#333">ATA标准:</div>
<div class="t" style="left:445px;top:611px;font-size:7.5px;color:#444">65535</div>
<div class="t m" style="left:537px;top:611px;font-size:7.5px;color:#333">固件版本:</div>
<div class="t" style="left:672px;top:611px;font-size:7.5px;color:#444">SN02</div>
<svg style="left:504px;top:517px" width="10" height="10" viewBox="0 0 10 10"><circle cx="5" cy="5" r="5" fill="#1a86f0"/><rect x="4.3" y="4" width="1.4" height="3.8" fill="#fff"/><circle cx="5" cy="2.6" r=".8" fill="#fff"/></svg>
</div>

<!-- ================= OVERLAYS ================= -->
<div id="ov">
<!-- php.cn watermarks -->
<div class="a wm" style="left:97px;top:343px;opacity:.34;font-size:23px;letter-spacing:1.6px">php.cn</div>
<div class="a" style="left:1px;top:52px;width:138px;height:100px;overflow:hidden"><div class="a wm" style="left:65px;top:12px;opacity:.30;letter-spacing:1.5px">p.c</div><div class="a wm" style="left:133px;top:91px;opacity:.22">p</div></div>
<div class="a wm" style="left:66px;top:529px;opacity:.3;letter-spacing:.8px">np.cn</div>
<div class="a" style="left:152px;top:80px;width:765px;height:35px;overflow:hidden"><div class="a wm" style="left:173.7px;top:29px;opacity:.33;font-size:23px;letter-spacing:1.6px">php.cn</div><div class="a wm" style="left:371.5px;top:-9.1px;opacity:.33;font-size:23px;letter-spacing:1.6px">php.cn</div><div class="a wm" style="left:640.4px;top:28.5px;opacity:.33;font-size:23px;letter-spacing:1.6px">php.cn</div></div>
<!-- red click ring + cursor -->
<div class="a" style="left:548px;top:502px;width:35px;height:35px;border-radius:50%;border:2px solid rgba(240,150,140,.5);background:rgba(255,120,100,.05)"></div>
<svg style="left:567px;top:518px" width="9" height="14" viewBox="0 0 9 14"><path d="M.6.6v11l2.600-2.300 1.700 3.900 1.600-.7-1.700-3.800h3.500z" fill="#fff" stroke="#222" stroke-width=".8"/></svg>
<!-- wechat watermark -->
<svg style="left:511px;top:571px" width="42" height="28" viewBox="0 0 42 28"><g fill="#9a9a9a" opacity=".85"><path d="M15 1C7.300 1 1 6 1 12.300c0 3.500 2 6.600 5 8.700l-1.300 4 4.700-2.400c1.700.5 3.600.9 5.600.9.500 0 1 0 1.500-.1-.4-1.100-.6-2.200-.6-3.400 0-5.800 5.500-10.500 12.300-10.500.5 0 1 0 1.500.1C28.500 4.600 22.300 1 15 1z"/><path d="M41 20c0-5-5-9.200-11.200-9.200S18.600 15 18.600 20s5 9.200 11.200 9.200c1.400 0 2.800-.2 4-.6l3.700 2-1-3.200c2.700-1.700 4.500-4.400 4.500-7.400z" transform="translate(0,-3)"/></g><g fill="#fff"><circle cx="10.500" cy="9" r="1.600"/><circle cx="19.500" cy="9" r="1.600"/><circle cx="26" cy="15" r="1.300"/><circle cx="33.500" cy="15" r="1.300"/></g></svg>
<div class="a" style="left:556.5px;top:568px;font-size:25px;line-height:34px;font-weight:300;color:rgba(110,110,110,.82);letter-spacing:.3px;word-spacing:3.4px;font-family:'Liberation Sans','Noto Sans CJK SC',sans-serif">公众号 · 全栈工程师修炼指南</div>
</div>

</body>
</html>
